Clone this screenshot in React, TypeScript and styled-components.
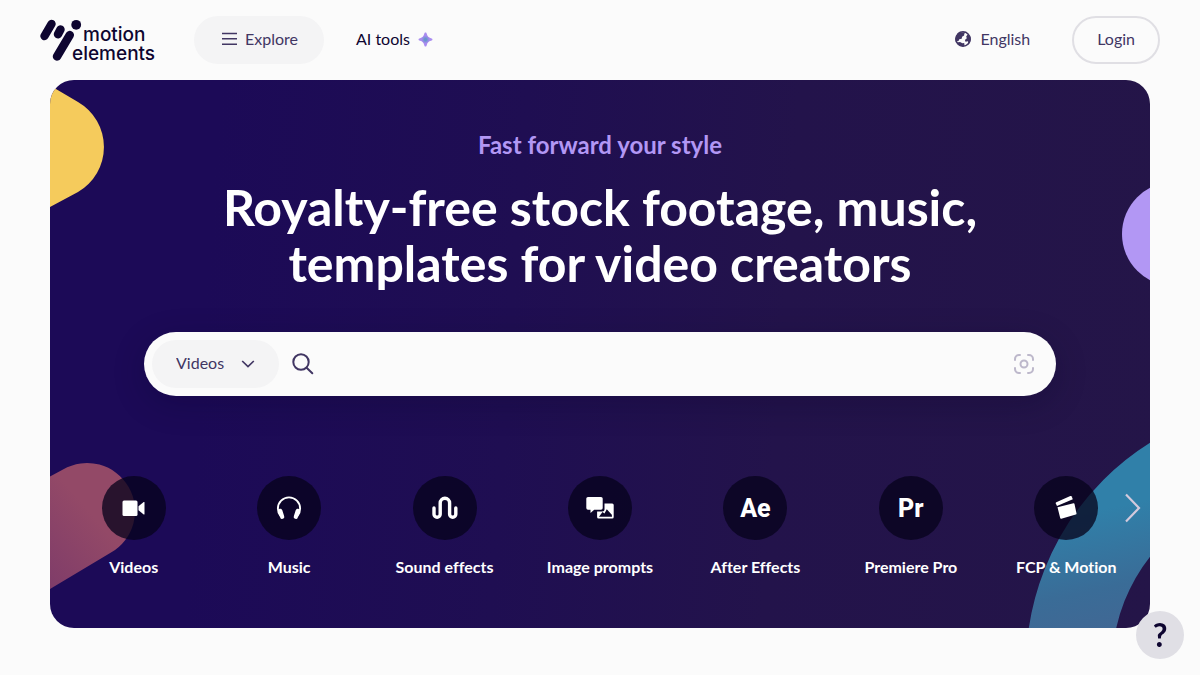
import React from "react";
import styled, { createGlobalStyle } from "styled-components";

const GlobalStyle = createGlobalStyle`
  *, *::before, *::after { box-sizing: border-box; }
  body {
    margin: 0;
    background: #fbfbfb;
    color: #413663;
    font-family: Lato, "Noto Sans", sans-serif;
    font-size: 16px;
    font-variant-ligatures: none;
    line-height: 24px;
  }
  button, input, select { font: inherit; color: inherit; }
  a { color: inherit; text-decoration: none; }
`;

const Header = styled.header`
  display: flex;
  align-items: center;
  height: 80px;
  padding: 0 40px;
`;

const Logo = styled.a`
  display: flex;
  margin-right: 34px;
  color: #0e0530;
`;

const PillButton = styled.button<{ $outlined?: boolean }>`
  display: flex;
  align-items: center;
  justify-content: center;
  gap: 8px;
  height: 48px;
  padding: ${(p) => (p.$outlined ? "0 23px 2px" : "0 26px 2px 28px")};
  border: ${(p) => (p.$outlined ? "2px solid #e0dfe4" : "0")};
  border-radius: 24px;
  background: ${(p) => (p.$outlined ? "transparent" : "#f4f4f5")};
  cursor: pointer;
`;

const NavLink = styled.a`
  display: flex;
  align-items: center;
  gap: 8px;
  margin-left: 32px;
  padding-bottom: 2px;
  color: #0e0530;
`;

const Account = styled.div`
  display: flex;
  align-items: center;
  gap: 40px;
  margin-left: auto;
`;

const LanguageButton = styled.button`
  display: flex;
  align-items: center;
  gap: 8px;
  padding: 0 2px 2px 0;
  border: 0;
  background: none;
  cursor: pointer;
`;

const Hero = styled.main`
  position: relative;
  display: flex;
  flex-direction: column;
  align-items: center;
  margin: 0 50px;
  padding: 49px 6px;
  overflow: hidden;
  border-radius: 24px;
  background: linear-gradient(94deg, #1c0a57 15%, #1f0e52 42%, #23134b 66%, #241548 100%);
  color: #fff;
`;

const Shape = styled.svg<{ $side: "left" | "right"; $top: number }>`
  position: absolute;
  top: ${(p) => p.$top}px;
  ${(p) => p.$side}: 0;
`;

const Tagline = styled.p`
  position: relative;
  margin: 0 0 18px;
  color: #b297f4;
  font-size: 24px;
  font-weight: 700;
  line-height: 32px;
`;

const Title = styled.h1`
  position: relative;
  max-width: 800px;
  margin: 0 0 41px;
  font-size: 50px;
  font-weight: 700;
  line-height: 56px;
  text-align: center;
`;

const SearchBar = styled.form`
  position: relative;
  display: flex;
  align-items: center;
  width: 84%;
  max-width: 912px;
  height: 64px;
  margin-bottom: 80px;
  padding: 0 20px 0 8px;
  border-radius: 32px;
  background: #fbfbfb;
  box-shadow: 0 8px 32px rgba(10, 4, 36, 0.24);
  color: #413663;
`;

const TypePicker = styled.label`
  display: grid;
  align-items: center;
  width: 127px;
  margin-right: 12px;

  > * { grid-area: 1 / 1; }
  > svg { justify-self: end; margin-right: 24px; pointer-events: none; }
`;

const TypeSelect = styled.select`
  width: 100%;
  height: 48px;
  padding: 0 48px 2px 24px;
  border: 0;
  border-radius: 24px;
  appearance: none;
  background: #f4f4f5;
  cursor: pointer;
`;

const IconButton = styled.button`
  display: flex;
  padding: 0;
  border: 0;
  background: none;
  cursor: pointer;
`;

const SearchInput = styled.input`
  flex: 1;
  min-width: 0;
  height: 48px;
  padding: 0 12px;
  border: 0;
  outline: 0;
  background: none;
`;

const Categories = styled.nav`
  position: relative;
  display: grid;
  grid-template-columns: repeat(7, 1fr);
  width: 100%;
`;

const Category = styled.a`
  display: flex;
  flex-direction: column;
  align-items: center;
  gap: 15px;
  font-weight: 700;
  white-space: nowrap;
`;

const CategoryIcon = styled.span`
  display: flex;
  align-items: center;
  justify-content: center;
  width: 64px;
  height: 64px;
  border-radius: 50%;
  background: rgba(6, 3, 28, 0.76);
`;

const AppInitials = styled.span`
  padding-top: 2px;
  font-family: Roboto, "Noto Sans", sans-serif;
  font-size: 25px;
  font-weight: 800;
`;

const NextButton = styled(IconButton)`
  position: absolute;
  top: 16px;
  right: 0;
`;

const HelpButton = styled.button`
  position: fixed;
  right: 16px;
  bottom: 16px;
  width: 48px;
  height: 48px;
  padding: 0;
  border: 0;
  border-radius: 50%;
  background: #e0dfe5;
  color: #0e0530;
  font-size: 32px;
  font-weight: 700;
  cursor: pointer;
`;

const LogoArt = () => (
  <svg width="120" height="48" viewBox="0 -2 120 48" role="img" aria-label="motion elements">
    <g stroke="currentColor" strokeWidth="8.4" strokeLinecap="round">
      <path d="M11.5 6 4.5 18M20.5 11.5 18 16.3M29.8 17 17 38.5" />
    </g>
    <circle cx="36.2" cy="6.8" r="4.9" fill="currentColor" />
    <g fill="currentColor" fontFamily="Inter, Lato, sans-serif" fontSize="19" fontWeight="500">
      <text x="43" y="23">motion</text>
      <text x="32" y="42">elements</text>
    </g>
  </svg>
);

const MenuIcon = () => (
  <svg width="15" height="14" viewBox="0 0 15 14" stroke="currentColor" strokeWidth="1.6">
    <path d="M0 1.5h15M0 6.8h15M0 12.2h15" />
  </svg>
);

const SparkleIcon = () => (
  <svg width="15" height="15" viewBox="0 0 16 16">
    <defs>
      <radialGradient id="sparkle">
        <stop offset="0.15" stopColor="#6796cb" />
        <stop offset="0.55" stopColor="#a98bf0" />
      </radialGradient>
    </defs>
    <path
      d="M8 .6C8.8.6 9 1 9.400 2.200c.7 2.500 1.900 3.700 4.400 4.400 1.200.4 1.600.6 1.600 1.400s-.4 1-1.600 1.400c-2.500.7-3.700 1.900-4.400 4.400-.4 1.200-.6 1.600-1.400 1.600s-1-.4-1.400-1.600c-.7-2.500-1.900-3.700-4.400-4.400C1 9 .6 8.800.6 8s.4-1 1.600-1.400c2.500-.7 3.700-1.900 4.400-4.400C7 1 7.200.6 8 .6Z"
      fill="url(#sparkle)"
    />
  </svg>
);

const GlobeIcon = () => (
  <svg width="18" height="18" viewBox="0 0 18 18">
    <circle cx="9" cy="9" r="7.2" fill="none" stroke="currentColor" strokeWidth="1.5" />
    <path
      d="M11.8 2 4 2.8 1.500 8v3.500l3-.6.8-1.700 2.400-.4.4-2 2-1.400.2-1.700ZM13.800 4.200l-1.600 2.300.6 1.800-1.900 1.700.6 1.700 2.400-.4.6 1.500-1.600 2.600 2.400-1.700 1.300-3.200V7Z"
      fill="currentColor"
    />
    <path d="m2.500 12.600 3.500-.6 2.500 1.300 1.700-.4.300 2.600-1.500.9-4-1Z" fill="currentColor" />
  </svg>
);

const ChevronIcon = () => (
  <svg width="14" height="8" viewBox="0 0 14 8" fill="none" stroke="currentColor" strokeWidth="1.7">
    <path d="m1.200 1 5.800 5.500L12.800 1" />
  </svg>
);

const SearchIcon = () => (
  <svg width="24" height="24" viewBox="0 0 24 24" fill="none" stroke="currentColor" strokeWidth="2" strokeLinecap="round">
    <circle cx="10" cy="10" r="7.7" />
    <path d="m15.600 15.700 5.700 5.500" />
  </svg>
);

const ScanIcon = () => (
  <svg width="24" height="24" viewBox="0 0 24 24" fill="none" stroke="#bdb8cb" strokeWidth="2" strokeLinecap="round">
    <path d="M3 8V7a4 4 0 0 1 4-4h1M16 3h1a4 4 0 0 1 4 4v1M21 16v1a4 4 0 0 1-4 4h-1M8 21H7a4 4 0 0 1-4-4v-1" />
    <circle cx="12" cy="12" r="3.5" />
  </svg>
);

const VideoIcon = () => (
  <svg width="24" height="24" viewBox="0 0 24 24" fill="#fff">
    <rect x="0.5" y="4.5" width="15" height="15.5" rx="1.5" />
    <path d="M16.500 10.200 21.700 6q.8-.4.800.5v11.500q0 .9-.8.500l-5.200-4.200Z" />
  </svg>
);

const HeadphonesIcon = () => (
  <svg width="26" height="24" viewBox="0 0 26 24" fill="none" stroke="#fff">
    <path d="M4.500 20C2.500 17.500 1.900 15 1.900 12.500a11 11 0 0 1 22.200 0c0 2.500-.6 5-2.600 7.500" strokeWidth="1.9" />
    <path d="m4.300 14.800 1.900 6M21.700 14.800l-1.900 6" strokeWidth="4.2" strokeLinecap="round" />
  </svg>
);

const WaveIcon = () => (
  <svg width="26" height="24" viewBox="0 0 26 24" fill="none" stroke="#fff" strokeWidth="3.4" strokeLinecap="round">
    <path d="M2 12v6.200a3 3 0 0 0 6.200 0V7a4.700 4.700 0 0 1 9.400 0v11.200a3 3 0 0 0 6.200 0V12" />
  </svg>
);

const ImagePromptIcon = () => (
  <svg width="28" height="24" viewBox="0 0 28 24">
    <path d="M2 .9h13q1.700 0 1.700 1.700v9.400q0 1.700-1.700 1.700H8.200L4.500 17v-3.300H2q-1.700 0-1.700-1.700V2.600Q.3.900 2 .9Z" fill="#fff" />
    <path
      fillRule="evenodd"
      d="M18.500 7.600h7.700q1.500 0 1.500 1.500v11.900q0 1.500-1.500 1.500H12.600q-1.500 0-1.500-1.500v-5.500h5.400q2 0 2-2ZM13 20.800h13l-.2-2-5-5.600-2.300 4.200-2-1.400Z"
      fill="#fff"
    />
  </svg>
);

const ClapperIcon = () => (
  <svg width="24" height="26" viewBox="0 0 24 26" fill="#fff">
    <path d="m2.300 7.300 14-6.200q1-.4 1.400.5l1.100 2.700L3 11.100 1.800 8.500q-.3-.8.500-1.200Z" />
    <path d="m3.500 12.300 16-4q.8-.2 1 .6l2 9.500q.2.900-.7 1.100L7.300 23.700q-.9.200-1.100-.7Z" />
  </svg>
);

const categories: { label: string; icon: React.ReactNode }[] = [
  { label: "Videos", icon: <VideoIcon /> },
  { label: "Music", icon: <HeadphonesIcon /> },
  { label: "Sound effects", icon: <WaveIcon /> },
  { label: "Image prompts", icon: <ImagePromptIcon /> },
  { label: "After Effects", icon: <AppInitials>Ae</AppInitials> },
  { label: "Premiere Pro", icon: <AppInitials>Pr</AppInitials> },
  { label: "FCP & Motion", icon: <ClapperIcon /> },
];

const HeroShapes = () => (
  <>
    <Shape $side="left" $top={0} width="60" height="140" viewBox="0 0 60 140" aria-hidden="true">
      <path d="M0 5.500 28 22A52 52 0 0 1 28 112L0 127Z" fill="#f5cb5c" />
    </Shape>
    <Shape $side="left" $top={380} width="90" height="140" viewBox="0 0 90 140" aria-hidden="true">
      <defs>
        <linearGradient id="rose" x1="0.8" y1="0" x2="0" y2="1">
          <stop offset="0.4" stopColor="#934967" />
          <stop offset="1" stopColor="#7f3c69" />
        </linearGradient>
      </defs>
      <path d="M0 16.500 13 9.400A48 48 0 1 1 61 92.600L0 129Z" fill="url(#rose)" />
    </Shape>
    <Shape $side="right" $top={100} width="28" height="108" viewBox="0 0 28 108" aria-hidden="true">
      <circle cx="52" cy="54" r="52" fill="#b297f4" />
    </Shape>
    <Shape $side="right" $top={348} width="130" height="200" viewBox="0 0 130 200" aria-hidden="true">
      <defs>
        <linearGradient id="teal" gradientUnits="userSpaceOnUse" x1="90" y1="20" x2="130" y2="210">
          <stop offset="0.3" stopColor="#3080a9" />
          <stop offset="0.7" stopColor="#3a6c97" />
          <stop offset="1" stopColor="#436693" />
        </linearGradient>
      </defs>
      <circle cx="270" cy="238.6" r="221" fill="none" stroke="url(#teal)" strokeWidth="86" />
    </Shape>
  </>
);

export default function App() {
  return (
    <>
      <GlobalStyle />
      <Header>
        <Logo href="#">
          <LogoArt />
        </Logo>
        <PillButton type="button">
          <MenuIcon />
          Explore
        </PillButton>
        <NavLink href="#ai-tools">
          AI tools
          <SparkleIcon />
        </NavLink>
        <Account>
          <LanguageButton type="button">
            <GlobeIcon />
            English
          </LanguageButton>
          <PillButton type="button" $outlined>
            Login
          </PillButton>
        </Account>
      </Header>
      <Hero>
        <HeroShapes />
        <Tagline>Fast forward your style</Tagline>
        <Title>Royalty-free stock footage, music, templates for video creators</Title>
        <SearchBar role="search" onSubmit={(e) => e.preventDefault()}>
          <TypePicker>
            <TypeSelect aria-label="Media type" defaultValue="Videos">
              <option>Videos</option>
              <option>Music</option>
            </TypeSelect>
            <ChevronIcon />
          </TypePicker>
          <IconButton type="submit" aria-label="Search">
            <SearchIcon />
          </IconButton>
          <SearchInput type="search" aria-label="Search stock media" />
          <IconButton type="button" aria-label="Search by image">
            <ScanIcon />
          </IconButton>
        </SearchBar>
        <Categories aria-label="Categories">
          {categories.map((c) => (
            <Category key={c.label} href="#">
              <CategoryIcon>{c.icon}</CategoryIcon>
              {c.label}
            </Category>
          ))}
          <NextButton type="button" aria-label="Next categories">
            <svg width="24" height="32" viewBox="0 0 24 32" fill="none" stroke="#d3c9dc" strokeWidth="2.2">
              <path d="M6 2.500 19 16 6 29.500" />
            </svg>
          </NextButton>
        </Categories>
      </Hero>
      <HelpButton type="button" aria-label="Help">
        ?
      </HelpButton>
    </>
  );
}
